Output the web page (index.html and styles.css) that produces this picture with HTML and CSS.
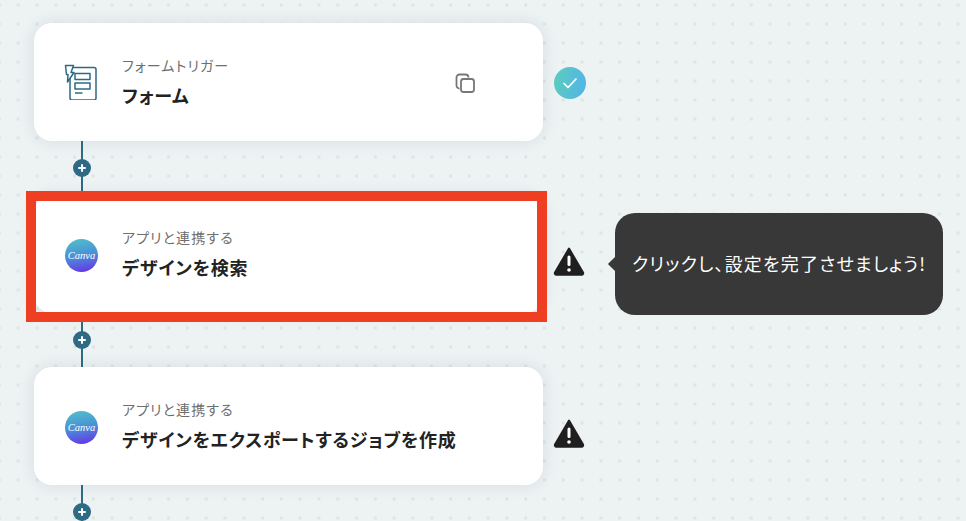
FILE: index.html
```html
<!DOCTYPE html>
<html lang="ja">
<head>
  <meta charset="UTF-8">
  <meta name="viewport" content="width=device-width, initial-scale=1.0">
  <title>フロー</title>
  <link rel="stylesheet" href="styles.css">
</head>
<body>
  <div class="flow">
    <div class="row">
      <div class="card">
        <svg class="app-icon" viewBox="0 0 34 36" fill="none" stroke="#2f6a85" stroke-width="1.500" stroke-linejoin="round">
          <path d="M8 3.500h22a2 2 0 0 1 2 2v28.500a2 2 0 0 1-2 2h-22a2 2 0 0 1-2-2v-20"/>
          <rect x="11" y="9.500" width="15" height="6"/>
          <rect x="11" y="19" width="15" height="6"/>
          <path d="M11 29h7.500"/>
          <path d="M1.500 1.500h8l-2.500 7h3l-6.500 9.500 0.500-7.500h-1.500z" fill="#fff"/>
        </svg>
        <div class="card-text">
          <div class="card-label">フォームトリガー</div>
          <div class="card-title">フォーム</div>
        </div>
        <svg class="copy-icon" viewBox="0 0 20 20" fill="none" stroke="#777" stroke-width="1.800">
          <path d="M4.500 15.500a3 3 0 0 1-3-3v-8a3 3 0 0 1 3-3h6a3 3 0 0 1 3 3"/>
          <rect x="6" y="6" width="13" height="13" rx="2.500"/>
        </svg>
      </div>
      <div class="check">
        <svg viewBox="0 0 16 12" fill="none" stroke="#fff" stroke-width="1.700" stroke-linecap="round" stroke-linejoin="round">
          <path d="M2 6.500l4 4 8-8.500"/>
        </svg>
      </div>
    </div>
    <div class="connector"><span class="add"></span></div>

    <div class="row">
      <div class="card">
        <div class="canva">
          <span class="canva-text">Canva</span>
        </div>
        <div class="card-text">
          <div class="card-label">アプリと連携する</div>
          <div class="card-title">デザインを検索</div>
        </div>
      </div>
      <svg class="warn" viewBox="0 0 32 30">
        <path d="M16 2.500L30 26.500a1.500 1.500 0 0 1-1.300 2.200H3.300a1.500 1.500 0 0 1-1.300-2.200z" fill="#1f1f1f" stroke="#1f1f1f" stroke-width="2" stroke-linejoin="round"/>
        <rect x="14.500" y="9.500" width="3" height="10.500" rx="1.500" fill="#fff"/>
        <circle cx="16" cy="24" r="1.800" fill="#fff"/>
      </svg>
      <div class="tooltip">クリックし、設定を完了させましょう!</div>
      <div class="highlight"></div>
    </div>
    <div class="connector"><span class="add"></span></div>

    <div class="row">
      <div class="card">
        <div class="canva">
          <span class="canva-text">Canva</span>
        </div>
        <div class="card-text">
          <div class="card-label">アプリと連携する</div>
          <div class="card-title">デザインをエクスポートするジョブを作成</div>
        </div>
      </div>
      <svg class="warn" viewBox="0 0 32 30">
        <path d="M16 2.500L30 26.500a1.500 1.500 0 0 1-1.300 2.200H3.300a1.500 1.500 0 0 1-1.300-2.200z" fill="#1f1f1f" stroke="#1f1f1f" stroke-width="2" stroke-linejoin="round"/>
        <rect x="14.500" y="9.500" width="3" height="10.500" rx="1.500" fill="#fff"/>
        <circle cx="16" cy="24" r="1.800" fill="#fff"/>
      </svg>
    </div>
    <div class="connector"><span class="add"></span></div>
  </div>
</body>
</html>
```

FILE: styles.css
```css
html, body {
  height: 100%;
}
body {
  margin: 0;
  overflow: hidden;
  font-family: "Noto Sans CJK JP", "Noto Sans", sans-serif;
  font-feature-settings: "palt";
  color: #222;
  background-color: #edf2f3;
  background-image: radial-gradient(circle, #dfe4e5 1.500px, transparent 2px);
  background-size: 18.800px 19px;
  background-position: -10px -4.500px;
}
.flow {
  padding: 23px 0 0 34px;
}
.row {
  position: relative;
  display: flex;
  align-items: center;
}
.card {
  box-sizing: border-box;
  width: 509px;
  height: 118px;
  flex: none;
  display: flex;
  align-items: center;
  padding: 0 30px;
  background-color: white;
  border-radius: 18px;
  box-shadow: 0 0 16px rgba(40, 70, 80, 0.11);
}
.app-icon {
  width: 34px;
  height: 36px;
  flex: none;
  margin-right: 24px;
}
.canva {
  width: 33px;
  height: 33px;
  flex: none;
  margin: 3px 24px 0 1px;
  display: flex;
  align-items: center;
  justify-content: center;
  border-radius: 50%;
  background: linear-gradient(170deg, #4fc3c8 0%, #4a8fd8 50%, #6a2ce8 100%);
}
.canva-text {
  font-family: "Liberation Serif", serif;
  font-style: italic;
  font-size: 10.500px;
  line-height: 12px;
  color: white;
}
.card-text {
  flex: 1;
  margin-top: -1px;
}
.card-label {
  font-size: 14px;
  line-height: 18px;
  letter-spacing: 1.100px;
  color: #6e6e6e;
}
.card-title {
  margin-top: 9px;
  font-size: 18px;
  line-height: 24px;
  font-weight: 700;
  letter-spacing: 0.800px;
}
.copy-icon {
  width: 20px;
  height: 20px;
  flex: none;
  margin-right: 38px;
  margin-top: 2px;
}
.check {
  width: 32px;
  height: 32px;
  flex: none;
  margin: 2px 0 0 11px;
  display: flex;
  align-items: center;
  justify-content: center;
  border-radius: 50%;
  background: linear-gradient(100deg, #5ccdbd, #52b3e8);
}
.check svg {
  width: 16px;
  height: 12px;
}
.warn {
  width: 32px;
  height: 30px;
  flex: none;
  margin: 13px 0 0 10px;
}
.connector {
  position: relative;
  width: 2px;
  height: 54px;
  margin-left: 47px;
  background-color: #2f6a85;
}
.add {
  position: absolute;
  left: -8px;
  top: 18px;
  width: 18px;
  height: 18px;
  border-radius: 50%;
  background-color: #2f6a85;
}
.add::before, .add::after {
  content: "";
  position: absolute;
  background-color: white;
  border-radius: 1px;
}
.add::before {
  left: 5px;
  top: 8px;
  width: 8px;
  height: 2px;
}
.add::after {
  left: 8px;
  top: 5px;
  width: 2px;
  height: 8px;
}
.tooltip {
  position: absolute;
  left: 581px;
  top: 18px;
  box-sizing: border-box;
  width: 328px;
  height: 102px;
  padding: 0 0 3px 17px;
  display: flex;
  align-items: center;
  border-radius: 20px;
  background-color: #383838;
  color: white;
  font-size: 18px;
  letter-spacing: 1.200px;
  white-space: nowrap;
}
.tooltip::before {
  content: "";
  position: absolute;
  left: -5px;
  top: 46px;
  width: 10px;
  height: 10px;
  background-color: #383838;
  transform: rotate(45deg);
}
.highlight {
  position: absolute;
  z-index: 1;
  left: -8px;
  top: -4px;
  width: 521px;
  height: 131px;
  box-sizing: border-box;
  border: 10px solid #ee3f23;
  pointer-events: none;
}
```
